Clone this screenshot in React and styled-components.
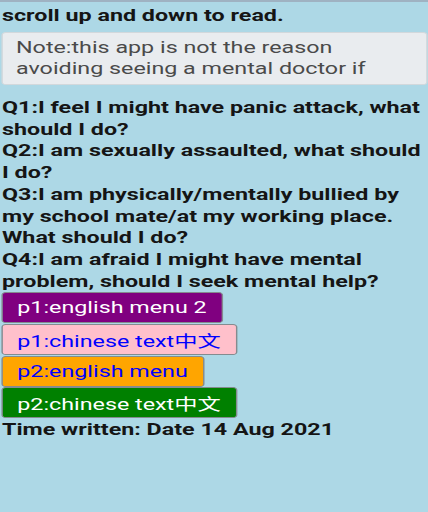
import React from "react";
import styled, { createGlobalStyle } from "styled-components";

// the screen this comes from draws its text wide, so the page is
// laid out narrow and stretched sideways to the full window width
const STRETCH = 1.43;

const GlobalStyle = createGlobalStyle`
    html, body {
        margin: 0;
        padding: 0;
        background-color: #add8e6;
    }
    body {
        font-family: Roboto, "Noto Sans CJK SC", sans-serif;
        border-top: 2px solid #9fb2c2;
        overflow: hidden;
    }
`

const Page = styled.div`
    box-sizing: border-box;
    width: ${428 / STRETCH}px;
    transform: scaleX(${STRETCH});
    transform-origin: 0 0;
    display: flex;
    flex-direction: column;
    align-items: flex-start;
    padding: 2.5px 0 0 1.4px;
    font-size: 16.3px;
`

const Heading = styled.h1`
    margin: 0;
    font-size: 16.3px;
    font-weight: 700;
    line-height: 22px;
    color: #151515;
`

const NoteBox = styled.div`
    box-sizing: border-box;
    align-self: stretch;
    margin: 5.5px 0.7px 12px 0;
    height: 53px;
    padding: 4px 8.8px;
    background-color: #e9ecef;
    border: 1px solid #d2d8dc;
    border-radius: 3px;
    color: #4a4a4a;
    line-height: 21px;
`

const NoteText = styled.div`
    height: 42px;
    overflow: hidden;
`

const Questions = styled.div`
    font-weight: 700;
    line-height: 21.7px;
    color: #151515;
`

const MenuButton = styled.button`
    display: block;
    box-sizing: border-box;
    margin: 0 0 0.7px -0.7px;
    height: 31px;
    padding: 0 10.4px;
    border: 1px solid #848b8f;
    border-radius: 3px;
    background-color: ${p => p.$bg};
    color: ${p => p.$fg};
    font-family: Roboto, "Noto Sans CJK SC", sans-serif;
    font-size: 16.3px;
    cursor: pointer;
`

const Footer = styled.p`
    margin: 0;
    font-weight: 700;
    line-height: 21px;
    color: #151515;
`

const questions = [
    "Q1:I feel I might have panic attack, what should I do?",
    "Q2:I am sexually assaulted, what should I do?",
    "Q3:I am physically/mentally bullied by my school mate/at my working place. What should I do?",
    "Q4:I am afraid I might have mental problem, should I seek mental help?",
];

const menus = [
    { label: "p1:english menu 2", bg: "#800080", fg: "#ffffff" },
    { label: "p1:chinese text中文", bg: "#ffc0cb", fg: "#0000ff" },
    { label: "p2:english menu", bg: "#ffa500", fg: "#0000ff" },
    { label: "p2:chinese text中文", bg: "#008000", fg: "#ffffff" },
];

export default function App() {
    return (
        <>
            <GlobalStyle />
            <Page>
                <Heading>scroll up and down to read.</Heading>
                <NoteBox>
                    <NoteText>
                        Note:this app is not the reason avoiding seeing a mental doctor if
                        necessary.
                    </NoteText>
                </NoteBox>
                <Questions>
                    {questions.map(q => <div key={q}>{q}</div>)}
                </Questions>
                {menus.map(m => (
                    <MenuButton key={m.label} $bg={m.bg} $fg={m.fg}>{m.label}</MenuButton>
                ))}
                <Footer>Time written: Date 14 Aug 2021</Footer>
            </Page>
        </>
    );
}
